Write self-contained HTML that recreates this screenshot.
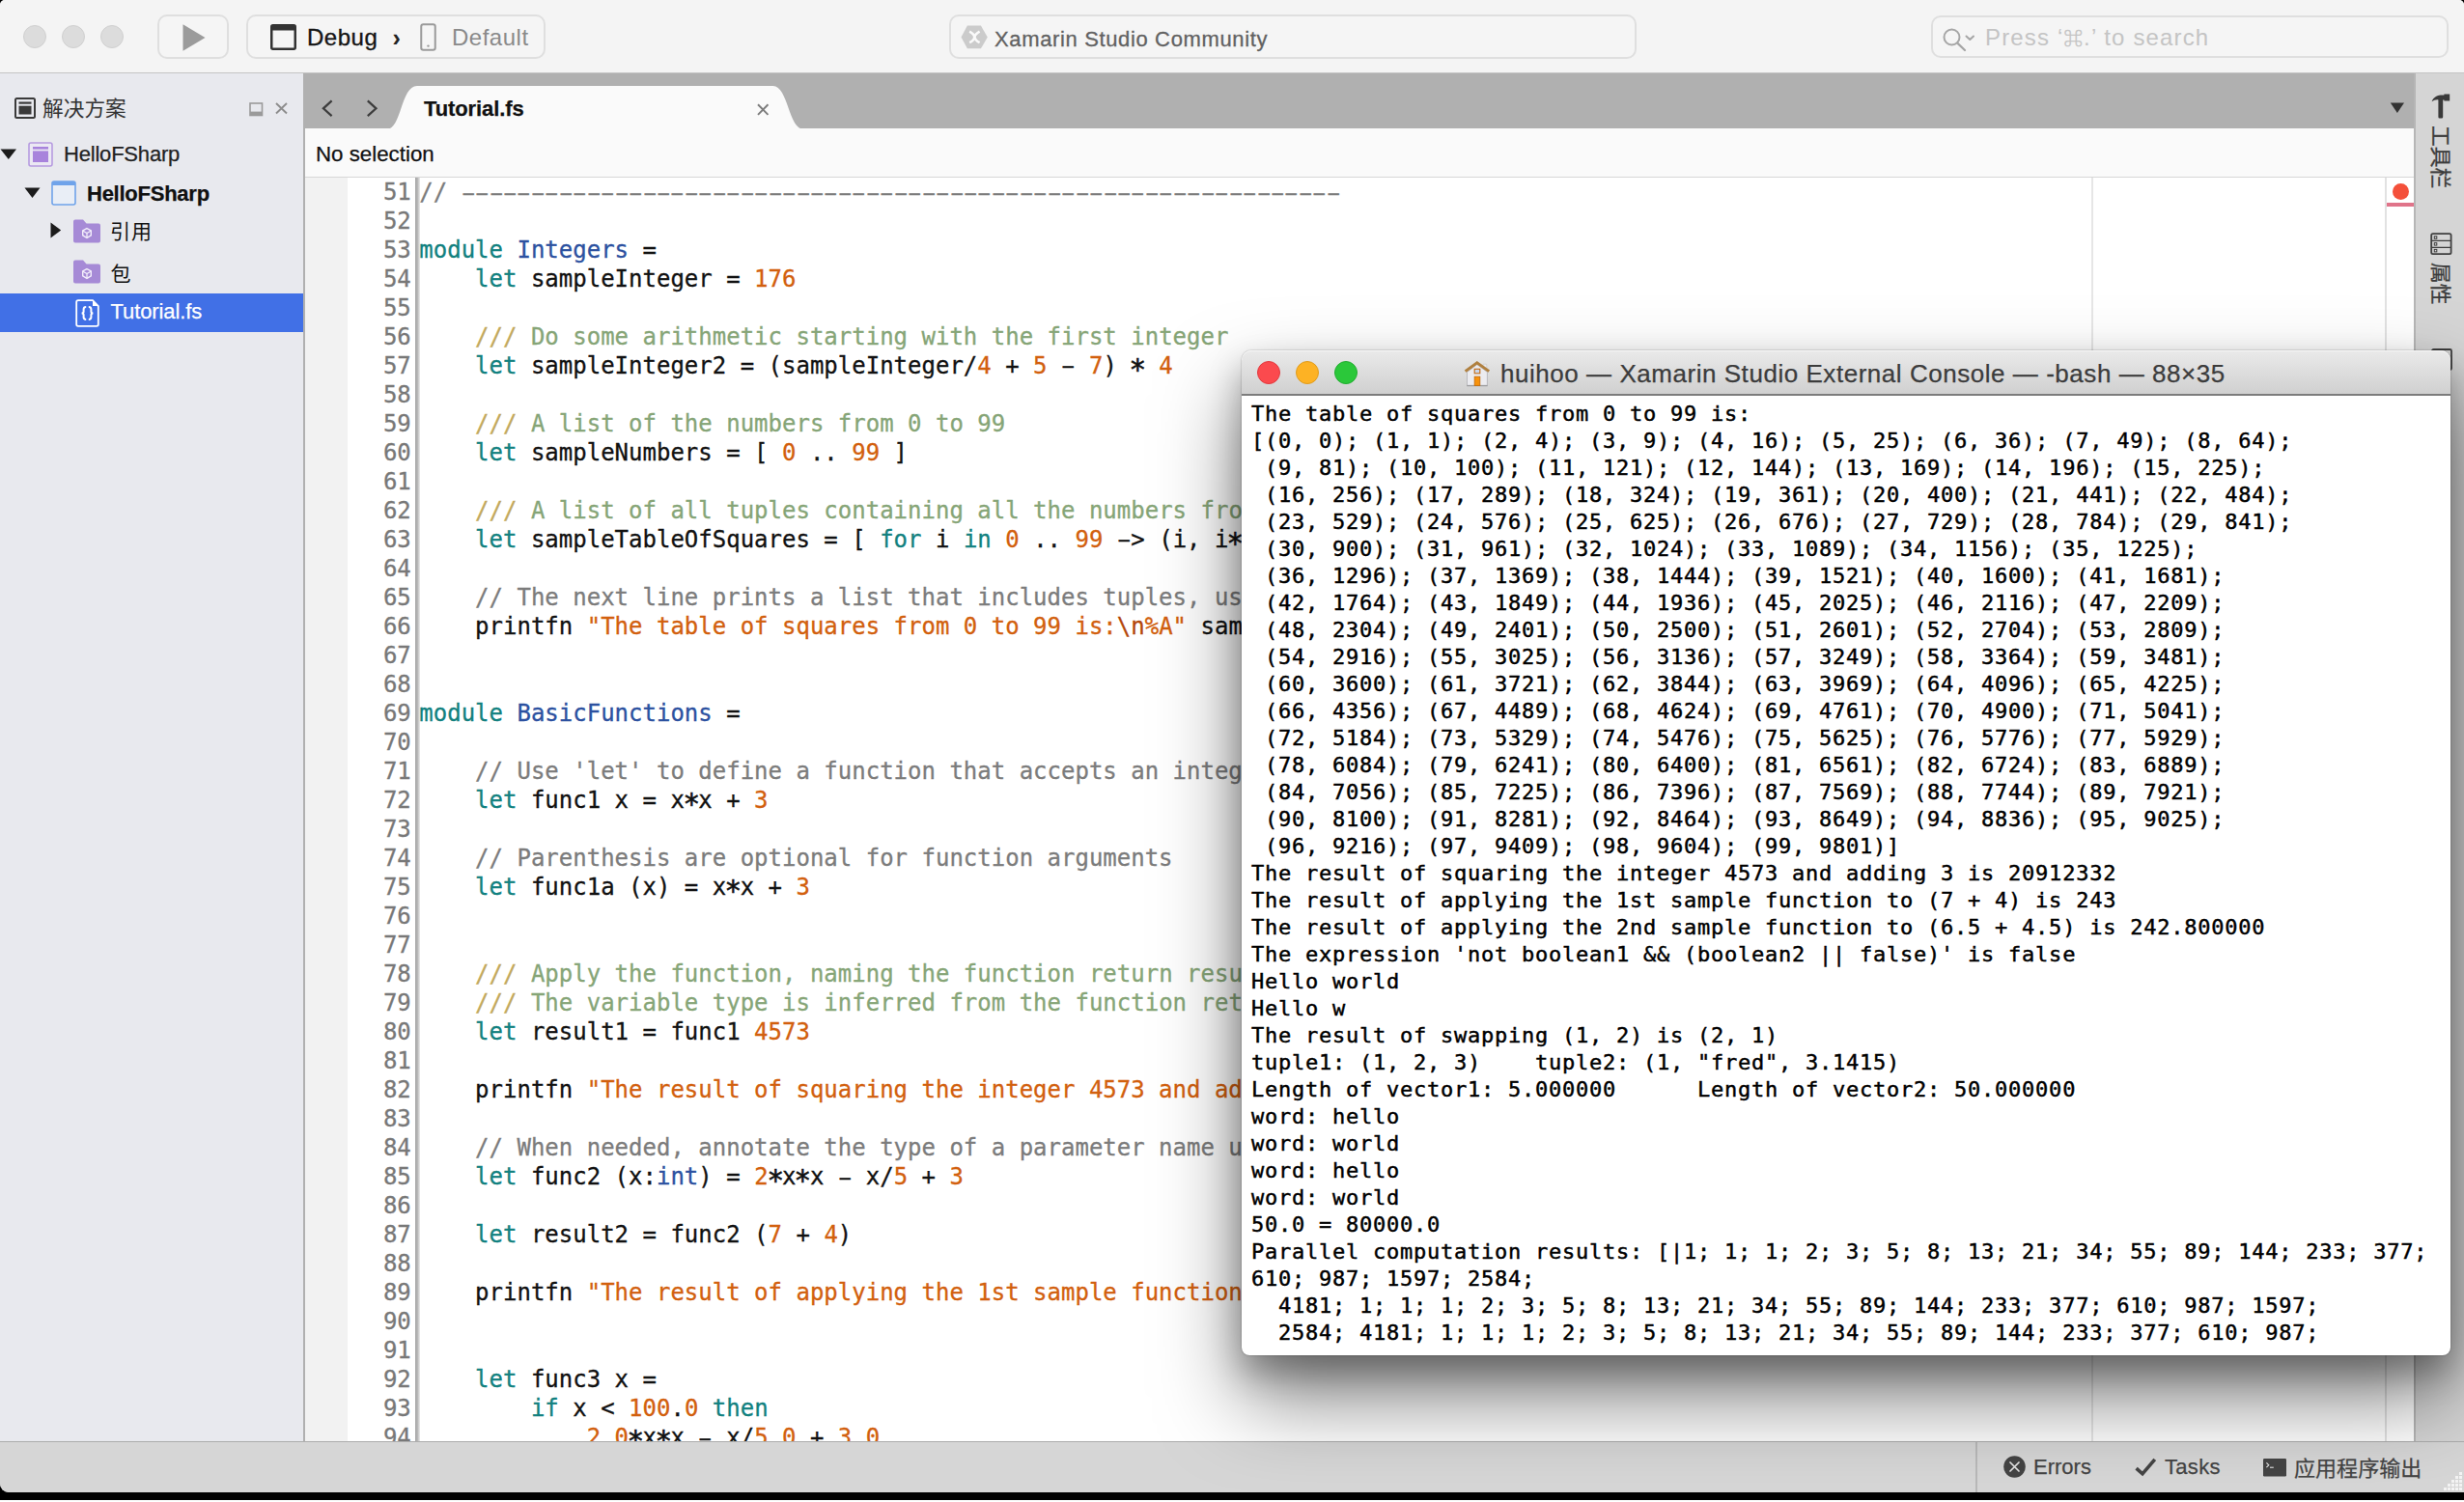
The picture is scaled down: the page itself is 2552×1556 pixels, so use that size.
<!DOCTYPE html>
<html lang="zh">
<head>
<meta charset="utf-8">
<title>Xamarin Studio - Tutorial.fs</title>
<style>
*{box-sizing:border-box;margin:0;padding:0}
html,body{width:2552px;height:1556px;overflow:hidden;background:#fff}
body{position:relative;font-family:"Liberation Sans","Noto Sans CJK SC",sans-serif;color:#111;-webkit-font-smoothing:antialiased}
.abs{position:absolute}
#desk{left:0;top:0;width:2552px;height:1553.5px;background:#000}
#win{left:0;top:0;width:2552px;height:1545.5px;background:#d6d6d6;border-radius:5px 5px 0 9px;overflow:hidden}
/* toolbar */
#tb{left:0;top:0;width:2552px;height:76px;background:#f4f4f4;border-bottom:1px solid #c4c4c4}
.tl{width:24px;height:24px;border-radius:50%;background:#dcdcdc;border:1px solid #d0d0d0;top:25.5px}
.btn{top:15px;height:46px;border:2px solid #dfdfdf;border-radius:10px;background:#f5f5f5}
.btn>*{margin-left:-1px;margin-top:-.5px}
.t24{font-size:24px;line-height:30px;white-space:nowrap}
.t22{font-size:22px;line-height:28px;white-space:nowrap;-webkit-text-stroke:.25px}
/* left pad */
#lp{left:0;top:75.5px;width:316px;height:1418px;background:#e8e9ee;border-right:2px solid #b0b0b0}
.row{left:0;width:314px;height:40px}
.cjk{font-family:"Noto Sans CJK SC","Liberation Sans",sans-serif}
/* tabs */
#tabs{left:316px;top:75.5px;width:2185.5px;height:57.5px;background:#b0b0b0}
#path{left:316px;top:133px;width:2185.5px;height:51px;background:#fafafa;border-bottom:1.5px solid #d6d6d6}
/* editor */
#ed{left:316px;top:184px;width:2185.5px;height:1309.5px;background:#fff;overflow:hidden}
#marg{left:0;top:0;width:44px;height:100%;background:#f2f2f2}
#fold{left:114px;top:0;width:4.5px;height:100%;background:linear-gradient(90deg,#a8a8a8,#b4b4b4 45%,#ececec)}
#code{left:-.7px;top:-.2px;font-family:"DejaVu Sans Mono","Liberation Mono",monospace;font-size:24px;line-height:30px;white-space:pre;color:#111;-webkit-text-stroke:.3px}
.cl{position:relative;height:30px;padding-left:119px;letter-spacing:0}
.ln{position:absolute;left:0;width:110.5px;text-align:right;color:#787878}
.kw{color:#12817f}.ty{color:#2c51a0}.nu{color:#d2600e}.st{color:#d2600e}.es{color:#b4470a}
.as{font-style:normal;display:inline-block;transform:translateY(4.3px) scale(1.22);-webkit-text-stroke:.5px}
.hy{font-style:normal;display:inline-block;transform:scale(1.8,.9);transform-origin:50% 60%}
.cm{color:#7c7c7c}.d3{color:#c3a95d}.dc{color:#86a577}
/* right pad */
#rp{left:2500px;top:75.5px;width:52px;height:1418px;background:#d5d5d5;border-left:2px solid #b6b6b6}
.vt{transform:rotate(90deg);transform-origin:0 0;font-size:21.8px;line-height:24px;white-space:nowrap;color:#3c3c3c;-webkit-text-stroke:.3px}
/* status bar */
#sb{left:0;top:1493px;width:2552px;height:52.5px;background:#d6d6d6;border-top:1.5px solid #adadad}
.sbt{-webkit-text-stroke:.25px;font-size:22px;line-height:28px;color:#444;white-space:nowrap;top:12px}
#sb svg{margin-top:-1px}
/* terminal */
#term{left:1286px;top:363px;width:1252px;height:1040.5px;border-radius:10px 10px 8px 8px;background:#fff;
 box-shadow:0 0 1.5px rgba(0,0,0,.5),0 44px 84px rgba(0,0,0,.5),0 18px 34px rgba(0,0,0,.28)}
#tt{left:0;top:0;width:100%;height:47px;border-radius:10px 10px 0 0;background:linear-gradient(#eaeaea,#d0d0d0);border-bottom:2px solid #7c7c7c;box-shadow:inset 0 1px 0 #f6f6f6}
.tc{width:24px;height:24px;border-radius:50%;top:11px}
#ttx{-webkit-text-stroke:.25px;font-size:26px;line-height:32px;color:#3c3c3c;white-space:nowrap;top:7.5px;left:268px;letter-spacing:.54px}
#tx{left:10px;top:51.5px;font-family:"DejaVu Sans Mono","Liberation Mono",monospace;font-size:22px;line-height:28px;letter-spacing:.757px;white-space:pre;color:#000;-webkit-text-stroke:.45px #000}
.tr{height:28px}
</style>
</head>
<body>
<div id="desk" class="abs"></div>
<div id="win" class="abs">

<!-- ===== toolbar ===== -->
<div id="tb" class="abs">
  <div class="abs tl" style="left:24px"></div>
  <div class="abs tl" style="left:64px"></div>
  <div class="abs tl" style="left:104px"></div>
  <div class="abs btn" style="left:163px;width:74px">
    <svg class="abs" style="left:24px;top:7px" width="26" height="30" viewBox="0 0 26 30"><path d="M1.5 1.2 L24.5 15 L1.5 28.8 Z" fill="#9b9b9b"/></svg>
  </div>
  <div class="abs btn" style="left:255px;width:310px">
    <svg class="abs" style="left:24px;top:8px" width="28" height="28" viewBox="0 0 28 28"><rect x="1.25" y="1.25" width="24.5" height="24.5" rx="1.5" fill="none" stroke="#333" stroke-width="2.5"/><rect x="1" y="1" width="25" height="5.5" fill="#333"/></svg>
    <span class="abs t24" style="left:62px;top:7.5px;color:#151515;letter-spacing:.5px;-webkit-text-stroke:.35px #151515" id="dbg">Debug</span>
    <span class="abs t24" style="left:150.5px;top:7.5px;color:#222;font-weight:bold;font-size:25px">›</span>
    <svg class="abs" style="left:179px;top:7.5px" width="18" height="30" viewBox="0 0 18 30"><rect x="1.25" y="1.25" width="14.5" height="26.5" rx="2.2" fill="none" stroke="#9a9a9a" stroke-width="2"/><circle cx="8.5" cy="23.6" r="1.2" fill="#9a9a9a"/></svg>
    <span class="abs t24" style="left:212px;top:7px;color:#8a8a8a;letter-spacing:.5px" id="dflt">Default</span>
  </div>
  <div class="abs btn" style="left:983px;width:712px">
    <svg class="abs" style="left:10.8px;top:9.1px" width="29" height="25" viewBox="0 0 29 25"><path d="M6.9 0.5 H20.9 L27.8 12.4 L20.9 24.3 H6.9 L0.5 12.4 Z" fill="#cbcbcb"/><path d="M9.2 6.6 Q19.2 12.4 9.2 18.2 M19.6 6.6 Q9.6 12.4 19.6 18.2" stroke="#fafafa" stroke-width="2.5" fill="none" stroke-linecap="butt"/></svg>
    <span class="abs t22" style="left:46px;top:10.5px;color:#626262;letter-spacing:.64px;-webkit-text-stroke:.3px" id="xsc">Xamarin Studio Community</span>
  </div>
  <div class="abs btn" style="left:2000px;width:536px;top:16px;height:44px">
    <svg class="abs" style="left:10px;top:9px" width="38" height="28" viewBox="0 0 38 28"><circle cx="10.5" cy="11.5" r="8" fill="none" stroke="#a6a6a6" stroke-width="2"/><path d="M16.3 17.6 L24 25" stroke="#a6a6a6" stroke-width="2.2" stroke-linecap="round"/><path d="M25.5 10.5 L29.3 14 L33 10.5" stroke="#a6a6a6" stroke-width="2" fill="none" stroke-linecap="round" stroke-linejoin="round"/></svg>
    <span class="abs t24" style="left:55px;top:6.5px;color:#c4c4c4;letter-spacing:1.15px" id="srch">Press ‘<span style="font-size:19.5px;-webkit-text-stroke:.5px;position:relative;top:-.5px">⌘</span>.’ to search</span>
  </div>
</div>

<!-- ===== solution pad ===== -->
<div id="lp" class="abs">
  <svg class="abs" style="left:15px;top:25.5px" width="22" height="22" viewBox="0 0 22 22"><rect x="1" y="1" width="20" height="20" rx="1.5" fill="none" stroke="#3a3a3a" stroke-width="2"/><rect x="4.5" y="4.5" width="13" height="2.2" fill="#3a3a3a"/><rect x="4.5" y="8.7" width="13" height="8.8" fill="#3a3a3a"/></svg>
  <span class="abs cjk" style="left:44px;top:19px;font-size:21.7px;line-height:32px;color:#333;white-space:nowrap" id="sln">解决方案</span>
  <svg class="abs" style="left:258px;top:30px" width="15" height="15" viewBox="0 0 15 15"><rect x="1" y="1" width="12.5" height="12.5" fill="none" stroke="#9a9a9a" stroke-width="1.6"/><rect x="1" y="9.6" width="12.5" height="4" fill="#9a9a9a"/></svg>
  <svg class="abs" style="left:284.6px;top:30.8px" width="13" height="13" viewBox="0 0 13 13"><path d="M1 1 L12 11.5 M12 1 L1 11.5" stroke="#8d8d8d" stroke-width="1.9" fill="none"/></svg>

  <!-- row 1 -->
  <svg class="abs" style="left:0;top:78px" width="18" height="12" viewBox="0 0 18 12"><path d="M0.5 0.5 H17 L8.8 11 Z" fill="#1c1c1c"/></svg>
  <svg class="abs" style="left:29px;top:71.5px" width="26" height="26" viewBox="0 0 26 26"><rect x="1" y="1" width="24" height="24" rx="2" fill="#ebe8f3" stroke="#b69be0" stroke-width="1.6"/><rect x="5" y="5" width="16" height="2.6" fill="#a883dc"/><rect x="5" y="9.4" width="16" height="11.6" fill="#a883dc"/></svg>
  <span class="abs t22" style="left:66px;top:70.5px;color:#222;letter-spacing:-.2px" id="r1">HelloFSharp</span>
  <!-- row 2 -->
  <svg class="abs" style="left:25px;top:118px" width="18" height="12" viewBox="0 0 18 12"><path d="M0.5 0.5 H16.5 L8.5 11 Z" fill="#1c1c1c"/></svg>
  <svg class="abs" style="left:53px;top:111.5px" width="26" height="26" viewBox="0 0 26 26"><rect x="1" y="1" width="24" height="24" rx="2" fill="#e9eef6" stroke="#6fa3ea" stroke-width="1.6"/><rect x="1" y="1" width="24" height="4" fill="#6fa3ea"/></svg>
  <span class="abs t22" style="left:90px;top:111.5px;color:#111;font-weight:bold;letter-spacing:-.25px" id="r2">HelloFSharp</span>
  <!-- row 3 -->
  <svg class="abs" style="left:51.6px;top:154.2px" width="12" height="18" viewBox="0 0 12 18"><path d="M0.5 0.5 V16.5 L11.2 8.5 Z" fill="#1c1c1c"/></svg>
  <svg class="abs" style="left:76px;top:151.5px" width="28" height="25" viewBox="0 0 28 25"><path d="M0 2.5 Q0 .5 2 .5 H10 L13.5 4.5 H26 Q28 4.5 28 6.5 V22.5 Q28 24.5 26 24.5 H2 Q0 24.5 0 22.5 Z" fill="#a68ad6"/><path d="M14 9.6 L18.3 12 V16.9 L14 19.4 L9.7 16.9 V12 Z" fill="none" stroke="#f3eefb" stroke-width="1.4"/><path d="M10 12.2 L14 14.5 L18 12.2 M14 14.5 V19" fill="none" stroke="#f3eefb" stroke-width="1.3"/></svg>
  <span class="abs cjk" style="left:114px;top:146.5px;font-size:21px;line-height:32px;color:#111;white-space:nowrap;letter-spacing:.9px">引用</span>
  <!-- row 4 -->
  <svg class="abs" style="left:76px;top:193.5px" width="28" height="25" viewBox="0 0 28 25"><path d="M0 2.5 Q0 .5 2 .5 H10 L13.5 4.5 H26 Q28 4.5 28 6.5 V22.5 Q28 24.5 26 24.5 H2 Q0 24.5 0 22.5 Z" fill="#a68ad6"/><path d="M14 9.6 L18.3 12 V16.9 L14 19.4 L9.7 16.9 V12 Z" fill="none" stroke="#f3eefb" stroke-width="1.4"/><path d="M10 12.2 L14 14.5 L18 12.2 M14 14.5 V19" fill="none" stroke="#f3eefb" stroke-width="1.3"/></svg>
  <span class="abs cjk" style="left:114.5px;top:190px;font-size:21px;line-height:32px;color:#111;white-space:nowrap">包</span>
  <!-- row 5 (selected) -->
  <div class="abs" style="left:0;top:228.5px;width:314px;height:39.5px;background:#4170e6"></div>
  <svg class="abs" style="left:77.5px;top:234px" width="25" height="29" viewBox="0 0 25 29"><path d="M3 1.2 H18 L23.8 7 V26 Q23.8 27.8 22 27.8 H3 Q1.2 27.8 1.2 26 V3 Q1.2 1.2 3 1.2 Z" fill="none" stroke="#fff" stroke-width="1.8"/><path d="M18 1.2 V7 H23.8 Z" fill="#fff"/><path d="M11.2 8 Q8.6 8 8.6 10.4 V12.8 Q8.6 14.5 6.6 14.5 Q8.6 14.5 8.6 16.2 V18.6 Q8.6 21 11.2 21 M13.8 8 Q16.4 8 16.4 10.4 V12.8 Q16.4 14.5 18.4 14.5 Q16.4 14.5 16.4 16.2 V18.6 Q16.4 21 13.8 21" fill="none" stroke="#fff" stroke-width="2"/></svg>
  <span class="abs t22" style="left:114.5px;top:233.5px;color:#fff;letter-spacing:-.1px" id="r5">Tutorial.fs</span>
</div>

<!-- ===== tab strip ===== -->
<div id="tabs" class="abs">
  <svg class="abs" style="left:0;top:0" width="600" height="58" viewBox="0 0 600 57.5" preserveAspectRatio="none">
    <path d="M84.5 57.5 C100 57.5 99 13 116 13 H484.5 C500.5 13 500.5 57.5 516.5 57.5 Z" fill="#fafafa"/>
    <path d="M27.6 28.2 L18.9 36 L27.6 43.8" fill="none" stroke="#3c3c3c" stroke-width="2.2" stroke-linecap="butt" stroke-linejoin="miter"/>
    <path d="M64.8 28.2 L73.5 36 L64.8 43.8" fill="none" stroke="#3c3c3c" stroke-width="2.2" stroke-linecap="butt" stroke-linejoin="miter"/>
    <path d="M469 32 L479.5 42.5 M479.5 32 L469 42.5" fill="none" stroke="#7c7c7c" stroke-width="1.9"/>
  </svg>
  <span class="abs t22" style="left:123px;top:23.5px;color:#111;font-weight:bold;letter-spacing:-.1px" id="tabt">Tutorial.fs</span>
  <svg class="abs" style="left:2159px;top:30px" width="16" height="12" viewBox="0 0 16 12"><path d="M0.8 0.6 H15 L7.9 11 Z" fill="#333"/></svg>
</div>
<div id="path" class="abs"><span class="abs t22" style="left:11px;top:12.5px;color:#111;font-size:22.3px" id="nosel">No selection</span></div>

<!-- ===== editor ===== -->
<div id="ed" class="abs">
  <div id="marg" class="abs"></div>
  <div class="abs" style="left:1850px;top:0;width:1.5px;height:100%;background:#e6e6e6"></div>
  <div class="abs" style="left:2154px;top:0;width:1.5px;height:100%;background:#e2e2e2"></div>
  <div class="abs" style="left:2161.5px;top:6px;width:17px;height:17px;border-radius:50%;background:#f4503a"></div>
  <div class="abs" style="left:2155.5px;top:26px;width:28.5px;height:4px;background:#e0748a"></div>
  <div id="fold" class="abs"></div>
  <div id="code" class="abs"><div class="cl"><span class="ln">51</span><span class="cm">// <i class="hy">-</i><i class="hy">-</i><i class="hy">-</i><i class="hy">-</i><i class="hy">-</i><i class="hy">-</i><i class="hy">-</i><i class="hy">-</i><i class="hy">-</i><i class="hy">-</i><i class="hy">-</i><i class="hy">-</i><i class="hy">-</i><i class="hy">-</i><i class="hy">-</i><i class="hy">-</i><i class="hy">-</i><i class="hy">-</i><i class="hy">-</i><i class="hy">-</i><i class="hy">-</i><i class="hy">-</i><i class="hy">-</i><i class="hy">-</i><i class="hy">-</i><i class="hy">-</i><i class="hy">-</i><i class="hy">-</i><i class="hy">-</i><i class="hy">-</i><i class="hy">-</i><i class="hy">-</i><i class="hy">-</i><i class="hy">-</i><i class="hy">-</i><i class="hy">-</i><i class="hy">-</i><i class="hy">-</i><i class="hy">-</i><i class="hy">-</i><i class="hy">-</i><i class="hy">-</i><i class="hy">-</i><i class="hy">-</i><i class="hy">-</i><i class="hy">-</i><i class="hy">-</i><i class="hy">-</i><i class="hy">-</i><i class="hy">-</i><i class="hy">-</i><i class="hy">-</i><i class="hy">-</i><i class="hy">-</i><i class="hy">-</i><i class="hy">-</i><i class="hy">-</i><i class="hy">-</i><i class="hy">-</i><i class="hy">-</i><i class="hy">-</i><i class="hy">-</i><i class="hy">-</i></span></div><div class="cl"><span class="ln">52</span></div><div class="cl"><span class="ln">53</span><span class="kw">module</span> <span class="ty">Integers</span> = </div><div class="cl"><span class="ln">54</span>    <span class="kw">let</span> sampleInteger = <span class="nu">176</span></div><div class="cl"><span class="ln">55</span></div><div class="cl"><span class="ln">56</span>    <span class="d3">///</span><span class="dc"> Do some arithmetic starting with the first integer</span></div><div class="cl"><span class="ln">57</span>    <span class="kw">let</span> sampleInteger2 = (sampleInteger/<span class="nu">4</span> + <span class="nu">5</span> <i class="hy">-</i> <span class="nu">7</span>) <i class="as">*</i> <span class="nu">4</span></div><div class="cl"><span class="ln">58</span></div><div class="cl"><span class="ln">59</span>    <span class="d3">///</span><span class="dc"> A list of the numbers from 0 to 99</span></div><div class="cl"><span class="ln">60</span>    <span class="kw">let</span> sampleNumbers = [ <span class="nu">0</span> .. <span class="nu">99</span> ]</div><div class="cl"><span class="ln">61</span></div><div class="cl"><span class="ln">62</span>    <span class="d3">///</span><span class="dc"> A list of all tuples containing all the numbers from 0 to 99 and their squares</span></div><div class="cl"><span class="ln">63</span>    <span class="kw">let</span> sampleTableOfSquares = [ <span class="kw">for</span> i <span class="kw">in</span> <span class="nu">0</span> .. <span class="nu">99</span> <i class="hy">-</i>&gt; (i, i<i class="as">*</i>i) ]</div><div class="cl"><span class="ln">64</span></div><div class="cl"><span class="ln">65</span>    <span class="cm">// The next line prints a list that includes tuples, using %A for generic printing</span></div><div class="cl"><span class="ln">66</span>    printfn <span class="st">"The table of squares from 0 to 99 is:<span class="es">\n</span>%A"</span> sampleTableOfSquares</div><div class="cl"><span class="ln">67</span></div><div class="cl"><span class="ln">68</span></div><div class="cl"><span class="ln">69</span><span class="kw">module</span> <span class="ty">BasicFunctions</span> = </div><div class="cl"><span class="ln">70</span></div><div class="cl"><span class="ln">71</span>    <span class="cm">// Use 'let' to define a function that accepts an integer argument and returns an integer. </span></div><div class="cl"><span class="ln">72</span>    <span class="kw">let</span> func1 x = x<i class="as">*</i>x + <span class="nu">3</span></div><div class="cl"><span class="ln">73</span></div><div class="cl"><span class="ln">74</span>    <span class="cm">// Parenthesis are optional for function arguments</span></div><div class="cl"><span class="ln">75</span>    <span class="kw">let</span> func1a (x) = x<i class="as">*</i>x + <span class="nu">3</span></div><div class="cl"><span class="ln">76</span></div><div class="cl"><span class="ln">77</span></div><div class="cl"><span class="ln">78</span>    <span class="d3">///</span><span class="dc"> Apply the function, naming the function return result using 'let'. </span></div><div class="cl"><span class="ln">79</span>    <span class="d3">///</span><span class="dc"> The variable type is inferred from the function return type.</span></div><div class="cl"><span class="ln">80</span>    <span class="kw">let</span> result1 = func1 <span class="nu">4573</span></div><div class="cl"><span class="ln">81</span></div><div class="cl"><span class="ln">82</span>    printfn <span class="st">"The result of squaring the integer 4573 and adding 3 is %d"</span> result1</div><div class="cl"><span class="ln">83</span></div><div class="cl"><span class="ln">84</span>    <span class="cm">// When needed, annotate the type of a parameter name using '(argument:type)'</span></div><div class="cl"><span class="ln">85</span>    <span class="kw">let</span> func2 (x:<span class="ty">int</span>) = <span class="nu">2</span><i class="as">*</i>x<i class="as">*</i>x <i class="hy">-</i> x/<span class="nu">5</span> + <span class="nu">3</span></div><div class="cl"><span class="ln">86</span></div><div class="cl"><span class="ln">87</span>    <span class="kw">let</span> result2 = func2 (<span class="nu">7</span> + <span class="nu">4</span>)</div><div class="cl"><span class="ln">88</span></div><div class="cl"><span class="ln">89</span>    printfn <span class="st">"The result of applying the 1st sample function to (7 + 4) is %d"</span> result2</div><div class="cl"><span class="ln">90</span></div><div class="cl"><span class="ln">91</span></div><div class="cl"><span class="ln">92</span>    <span class="kw">let</span> func3 x = </div><div class="cl"><span class="ln">93</span>        <span class="kw">if</span> x &lt; <span class="nu">100</span>.<span class="nu">0</span> <span class="kw">then</span> </div><div class="cl"><span class="ln">94</span>            <span class="nu">2</span>.<span class="nu">0</span><i class="as">*</i>x<i class="as">*</i>x <i class="hy">-</i> x/<span class="nu">5</span>.<span class="nu">0</span> + <span class="nu">3</span>.<span class="nu">0</span></div></div>
</div>

<!-- ===== right dock ===== -->
<div id="rp" class="abs">
  <svg class="abs" style="left:16px;top:21.5px" width="20" height="26" viewBox="0 0 20 26"><path d="M0.6 8.2 C2.6 3.4 6.6 1.6 11.6 1.6 H13.4 V0.6 H19.2 V7.6 H13.4 V6.6 H12.2 V24.2 Q12.2 25.4 11 25.4 H8.6 Q7.4 25.4 7.4 24.2 V6.4 C5 6 2.6 7 0.6 8.2 Z" fill="#3a3a3a"/></svg>
  <span class="abs vt cjk" style="left:38.5px;top:54.5px" id="v1">工具栏</span>
  <svg class="abs" style="left:15px;top:165px" width="23" height="24" viewBox="0 0 23 24"><rect x="1.2" y="1.2" width="20.4" height="21" rx="1.6" fill="none" stroke="#3f3f3f" stroke-width="1.8"/><path d="M1.2 8.3 H21.6 M1.2 15.3 H21.6" stroke="#3f3f3f" stroke-width="1.3"/><rect x="4.3" y="3.8" width="2.5" height="2.5" fill="none" stroke="#3f3f3f" stroke-width="1"/><rect x="4.3" y="10.6" width="2.5" height="2.5" fill="none" stroke="#3f3f3f" stroke-width="1"/><rect x="4.3" y="17.4" width="2.5" height="2.5" fill="none" stroke="#3f3f3f" stroke-width="1"/></svg>
  <span class="abs vt cjk" style="left:38.5px;top:196px" id="v2">属性</span>
  <svg class="abs" style="left:15.5px;top:285px" width="22" height="23" viewBox="0 0 22 23"><rect x="1" y="1" width="20" height="21" rx="1.5" fill="none" stroke="#3f3f3f" stroke-width="1.8"/></svg>
</div>

<!-- ===== status bar ===== -->
<div id="sb" class="abs">
  <div class="abs" style="left:2046px;top:0;width:1.5px;height:52px;background:#b9b9b9"></div>
  <svg class="abs" style="left:2074.5px;top:15px" width="23" height="23" viewBox="0 0 23 23"><circle cx="11.5" cy="11.5" r="11.3" fill="#444"/><path d="M7 7 L16 16 M16 7 L7 16" stroke="#e4e4e4" stroke-width="1.7" stroke-linecap="round"/></svg>
  <span class="abs sbt" style="left:2106px" id="serr">Errors</span>
  <svg class="abs" style="left:2210.5px;top:16.5px" width="23" height="20" viewBox="0 0 23 20"><path d="M1.6 11.2 L8 16.8 L20.8 1.8" fill="none" stroke="#444" stroke-width="3.6"/></svg>
  <span class="abs sbt" style="left:2242px;letter-spacing:.3px" id="stsk">Tasks</span>
  <svg class="abs" style="left:2344px;top:17.5px" width="24" height="19" viewBox="0 0 24 19"><rect x="0" y="0" width="24" height="18.5" rx="1.2" fill="#444"/><path d="M3.4 4.4 L5.8 6.8 L3.4 9.2" fill="none" stroke="#e4e4e4" stroke-width="1.1"/><path d="M7 9.2 H10.8" stroke="#e4e4e4" stroke-width="1.1"/></svg>
  <span class="abs sbt cjk" style="left:2376px;font-size:22.05px;top:10.5px" id="sout">应用程序输出</span>
  <svg class="abs" style="left:2530px;top:31px" width="22" height="22" viewBox="0 0 22 22"><g fill="#f4f4f4"><rect x="17" y="1" width="3" height="3"/><rect x="13" y="5" width="3" height="3"/><rect x="17" y="5" width="3" height="3"/><rect x="9" y="9" width="3" height="3"/><rect x="13" y="9" width="3" height="3"/><rect x="17" y="9" width="3" height="3"/><rect x="5" y="13" width="3" height="3"/><rect x="9" y="13" width="3" height="3"/><rect x="13" y="13" width="3" height="3"/><rect x="17" y="13" width="3" height="3"/><rect x="1" y="17" width="3" height="3"/><rect x="5" y="17" width="3" height="3"/><rect x="9" y="17" width="3" height="3"/><rect x="13" y="17" width="3" height="3"/><rect x="17" y="17" width="3" height="3"/></g></svg>
</div>

</div>
<!-- ===== external console (Terminal) ===== -->
<div id="term" class="abs">
  <div id="tt" class="abs">
    <div class="abs tc" style="left:16px;background:#fb4a4e;border:1px solid #e23a3f"></div>
    <div class="abs tc" style="left:56px;background:#fdb224;border:1px solid #e09c1c"></div>
    <div class="abs tc" style="left:96px;background:#2bc83a;border:1px solid #22ad30"></div>
    <svg class="abs" style="left:230px;top:10px" width="28" height="28" viewBox="0 0 28 28">
      <rect x="20" y="4.2" width="3.8" height="6" rx=".8" fill="#e9e9ec" stroke="#c4c4c4" stroke-width=".6"/>
      <path d="M3.5 12.4 L13.8 4.6 L24.4 12.4 V26.3 H3.5 Z" fill="#ececf0" stroke="#a9a9ad" stroke-width=".7"/>
      <path d="M3.2 26.7 H24.7" stroke="#8e8e92" stroke-width=".9"/>
      <path d="M1.6 11.6 L13.8 2.9 L26.2 11.6" fill="none" stroke="#b0803f" stroke-width="2.9" stroke-linejoin="miter"/>
      <rect x="11.2" y="9.3" width="5.6" height="4.5" fill="#c8d6ee" stroke="#c26a12" stroke-width="1.1"/>
      <rect x="11.2" y="17.2" width="5.6" height="9.2" fill="#f7920c" stroke="#c66c08" stroke-width=".9"/>
    </svg>
    <span class="abs" id="ttx">huihoo — Xamarin Studio External Console — -bash — 88×35</span>
  </div>
  <div id="tx" class="abs"><div class="tr">The table of squares from 0 to 99 is:</div><div class="tr">[(0, 0); (1, 1); (2, 4); (3, 9); (4, 16); (5, 25); (6, 36); (7, 49); (8, 64);</div><div class="tr"> (9, 81); (10, 100); (11, 121); (12, 144); (13, 169); (14, 196); (15, 225);</div><div class="tr"> (16, 256); (17, 289); (18, 324); (19, 361); (20, 400); (21, 441); (22, 484);</div><div class="tr"> (23, 529); (24, 576); (25, 625); (26, 676); (27, 729); (28, 784); (29, 841);</div><div class="tr"> (30, 900); (31, 961); (32, 1024); (33, 1089); (34, 1156); (35, 1225);</div><div class="tr"> (36, 1296); (37, 1369); (38, 1444); (39, 1521); (40, 1600); (41, 1681);</div><div class="tr"> (42, 1764); (43, 1849); (44, 1936); (45, 2025); (46, 2116); (47, 2209);</div><div class="tr"> (48, 2304); (49, 2401); (50, 2500); (51, 2601); (52, 2704); (53, 2809);</div><div class="tr"> (54, 2916); (55, 3025); (56, 3136); (57, 3249); (58, 3364); (59, 3481);</div><div class="tr"> (60, 3600); (61, 3721); (62, 3844); (63, 3969); (64, 4096); (65, 4225);</div><div class="tr"> (66, 4356); (67, 4489); (68, 4624); (69, 4761); (70, 4900); (71, 5041);</div><div class="tr"> (72, 5184); (73, 5329); (74, 5476); (75, 5625); (76, 5776); (77, 5929);</div><div class="tr"> (78, 6084); (79, 6241); (80, 6400); (81, 6561); (82, 6724); (83, 6889);</div><div class="tr"> (84, 7056); (85, 7225); (86, 7396); (87, 7569); (88, 7744); (89, 7921);</div><div class="tr"> (90, 8100); (91, 8281); (92, 8464); (93, 8649); (94, 8836); (95, 9025);</div><div class="tr"> (96, 9216); (97, 9409); (98, 9604); (99, 9801)]</div><div class="tr">The result of squaring the integer 4573 and adding 3 is 20912332</div><div class="tr">The result of applying the 1st sample function to (7 + 4) is 243</div><div class="tr">The result of applying the 2nd sample function to (6.5 + 4.5) is 242.800000</div><div class="tr">The expression 'not boolean1 &amp;&amp; (boolean2 || false)' is false</div><div class="tr">Hello world</div><div class="tr">Hello w</div><div class="tr">The result of swapping (1, 2) is (2, 1)</div><div class="tr">tuple1: (1, 2, 3)    tuple2: (1, "fred", 3.1415)</div><div class="tr">Length of vector1: 5.000000      Length of vector2: 50.000000</div><div class="tr">word: hello</div><div class="tr">word: world</div><div class="tr">word: hello</div><div class="tr">word: world</div><div class="tr">50.0 = 80000.0</div><div class="tr">Parallel computation results: [|1; 1; 1; 2; 3; 5; 8; 13; 21; 34; 55; 89; 144; 233; 377;</div><div class="tr">610; 987; 1597; 2584;</div><div class="tr">  4181; 1; 1; 1; 2; 3; 5; 8; 13; 21; 34; 55; 89; 144; 233; 377; 610; 987; 1597;</div><div class="tr">  2584; 4181; 1; 1; 1; 2; 3; 5; 8; 13; 21; 34; 55; 89; 144; 233; 377; 610; 987;</div></div>
</div>

</body>
</html>
